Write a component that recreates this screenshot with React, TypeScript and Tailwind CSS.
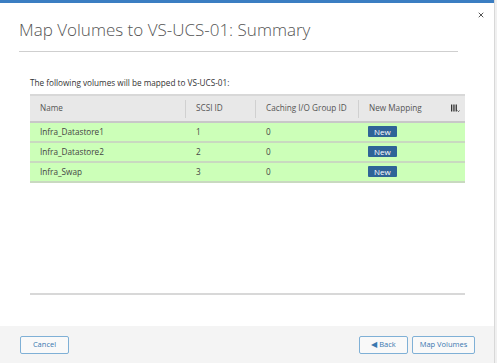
import { X } from "lucide-react";

const rows = [
    { name: "Infra_Datastore1", scsi: "1", group: "0" },
    { name: "Infra_Datastore2", scsi: "2", group: "0" },
    { name: "Infra_Swap", scsi: "3", group: "0" },
];

export default function App() {
    return (
        <div className="w-[497px] h-[363px] bg-white flex font-['Open_Sans',sans-serif] overflow-hidden">
            <div className="flex-1 flex flex-col border-t-[3px] border-[#3b7ec2]">
                {/* Header */}
                <div className="relative px-[19px] pt-[12px]">
                    <h1 className="text-[17px] font-light text-[#555] leading-[30px]">
                        Map Volumes to VS-UCS-01: Summary
                    </h1>
                    <X className="absolute right-[9px] top-[8px] w-[8px] h-[8px] text-[#333]" strokeWidth={2.5} />
                    <div className="mt-[6px] mr-[17px] border-t border-[#cfcfcf]" />
                </div>

                {/* Body */}
                <div className="flex-1 flex flex-col pl-[30px] pr-[29px]">
                    <p className="mt-[26px] text-[8.2px] text-[#333] leading-[10px]">
                        The following volumes will be mapped to VS-UCS-01:
                    </p>
                    <div className="mt-[6px] border-t-2 border-[#d8d8d8] text-[8.2px] text-[#555]">
                        <div className="flex h-[27px] items-center bg-[#e8e8e8] border-b-2 border-[#c8c8c8]">
                            <div className="w-[155px] pl-[10px]">Name</div>
                            <div className="w-[70px] h-[18px] flex items-center pl-[10px] border-l border-[#d0d0d0]">SCSI ID</div>
                            <div className="w-[103px] h-[18px] flex items-center pl-[10px] border-l border-[#d0d0d0]">Caching I/O Group ID</div>
                            <div className="flex-1 h-[18px] flex items-center justify-between pl-[10px] pr-[5px] border-l border-[#d0d0d0]">
                                <span>New Mapping</span>
                                <svg width="9" height="9" viewBox="0 0 9 9">
                                    <rect x="0" y="0.5" width="1.3" height="7" fill="#333" />
                                    <rect x="2.3" y="0.5" width="1.3" height="7" fill="#333" />
                                    <rect x="4.6" y="0.5" width="1.3" height="7" fill="#333" />
                                    <path d="M6.5 6.5 L7.5 7.6 L8.5 6.5" stroke="#333" strokeWidth="0.8" fill="none" />
                                </svg>
                            </div>
                        </div>
                        {rows.map((r) => (
                            <div key={r.name} className="flex h-[20px] items-center bg-[#ccffb8] border-b-2 border-[#c9d9c0] text-[#444]">
                                <div className="w-[155px] pl-[10px]">{r.name}</div>
                                <div className="w-[70px] pl-[11px]">{r.scsi}</div>
                                <div className="w-[103px] pl-[11px]">{r.group}</div>
                                <div className="flex-1 pl-[10px]">
                                    <span className="inline-block bg-[#2f6497] text-white text-[8px] leading-[11px] px-[6px] rounded-[1px]">
                                        New
                                    </span>
                                </div>
                            </div>
                        ))}
                    </div>
                    <div className="mt-auto mb-[31px] border-t-2 border-[#d8d8d8]" />
                </div>

                {/* Footer */}
                <div className="h-[37px] bg-[#f4f4f4] flex items-center justify-between pl-[20px] pr-[19px] text-[7.5px] text-[#3a78b0]">
                    <button className="w-[49px] h-[18px] border border-[#7fb0d6] rounded-[2px] bg-[#f9f9f9]">Cancel</button>
                    <div className="flex gap-[4px]">
                        <button className="w-[49px] h-[18px] border border-[#7fb0d6] rounded-[2px] bg-[#f9f9f9]">◀ Back</button>
                        <button className="w-[63px] h-[18px] border border-[#7fb0d6] rounded-[2px] bg-[#f9f9f9]">Map Volumes</button>
                    </div>
                </div>
            </div>
            <div className="w-[3px] border-l border-[#d8d8d8] bg-[#f0f0f0]" />
        </div>
    );
}
